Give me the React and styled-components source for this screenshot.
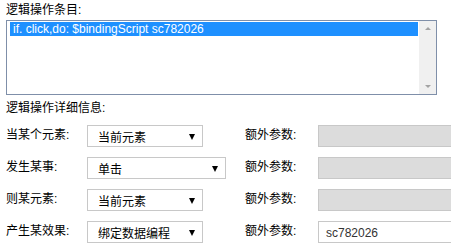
import React from 'react';
import styled, { createGlobalStyle } from 'styled-components';

const GlobalStyle = createGlobalStyle`
  html, body {
    margin: 0;
    padding: 0;
    background: #ffffff;
    overflow: hidden;
  }
  body {
    font-family: "Liberation Sans", "Noto Sans CJK SC", Arial, sans-serif;
    font-size: 12px;
    color: #000;
  }
`;

const rows = [
  { label: '当某个元素:', value: '当前元素', width: 116, param: '', disabled: true },
  { label: '发生某事:', value: '单击', width: 139, param: '', disabled: true },
  { label: '则某元素:', value: '当前元素', width: 116, param: '', disabled: true },
  { label: '产生某效果:', value: '绑定数据编程', width: 116, param: 'sc782026', disabled: false },
];

const App = () => {
  return (
    <Page>
      <GlobalStyle />
      <SectionTitle>逻辑操作条目:</SectionTitle>
      <ListBox>
        <ListItems>
          <ListItem selected>if. click,do: $bindingScript sc782026</ListItem>
        </ListItems>
        <ScrollBar>
          <ScrollArrow dir="up" />
          <ScrollArrow dir="down" />
        </ScrollBar>
      </ListBox>
      <SubTitle>逻辑操作详细信息:</SubTitle>
      <Form>
        {rows.map((row) => (
          <Row key={row.label}>
            <Label>{row.label}</Label>
            <Select style={{ width: row.width }}>
              <span>{row.value}</span>
              <Caret />
            </Select>
            <Label>额外参数:</Label>
            <ParamInput disabled={row.disabled}>{row.param}</ParamInput>
          </Row>
        ))}
      </Form>
    </Page>
  );
};

const Page = styled.div`
  padding: 3px 0 0 6px;
  width: 445px;
`;

const SectionTitle = styled.div`
  height: 17px;
  line-height: 15px;
`;

const ListBox = styled.div`
  display: flex;
  width: 429px;
  height: 73px;
  border: 1px solid #7f8fa9;
`;

const ListItems = styled.div`
  flex: 1;
  padding: 1px 1px 0 3px;
`;

const ListItem = styled.div`
  height: 14px;
  line-height: 14px;
  padding-left: 3px;
  font-size: 12px;
  background: ${(p) => (p.selected ? '#1e90ff' : 'transparent')};
  color: ${(p) => (p.selected ? '#fff' : '#000')};
  white-space: nowrap;
`;

const ScrollBar = styled.div`
  width: 17px;
  background: #f0f0f0;
  display: flex;
  flex-direction: column;
  justify-content: space-between;
  align-items: center;
  padding: 6px 0 6px;
`;

const ScrollArrow = styled.div`
  width: 0;
  height: 0;
  border-left: 3px solid transparent;
  border-right: 3px solid transparent;
  ${(p) =>
    p.dir === 'up'
      ? 'border-bottom: 3px solid #a3a3a3;'
      : 'border-top: 3px solid #a3a3a3;'}
`;

const SubTitle = styled.div`
  margin-top: 5px;
  height: 16px;
  line-height: 16px;
`;

const Form = styled.div`
  display: flex;
  flex-direction: column;
  gap: 10px;
  margin-top: 9px;
`;

const Row = styled.div`
  display: grid;
  grid-template-columns: 81px 158px 73px 1fr;
  align-items: center;
  height: 22px;
`;

const Label = styled.div`
  line-height: 16px;
  white-space: nowrap;
  margin-top: -3px;
`;

const Select = styled.div`
  box-sizing: border-box;
  height: 22px;
  border: 1px solid #c8c8c8;
  background: #fff;
  display: flex;
  align-items: center;
  justify-content: space-between;
  padding: 1px 7px 0 10px;
`;

const Caret = styled.div`
  width: 0;
  height: 0;
  border-left: 3.5px solid transparent;
  border-right: 3.5px solid transparent;
  border-top: 6px solid #000;
`;

/* the field runs on past the right edge of the panel, so no right border */
const ParamInput = styled.div`
  box-sizing: border-box;
  height: 22px;
  border: 1px solid #c8c8c8;
  border-right: none;
  background: ${(p) => (p.disabled ? '#dcdcdc' : '#fff')};
  color: #333;
  padding: 3px 0 0 7px;
  line-height: 16px;
`;

export default App;
